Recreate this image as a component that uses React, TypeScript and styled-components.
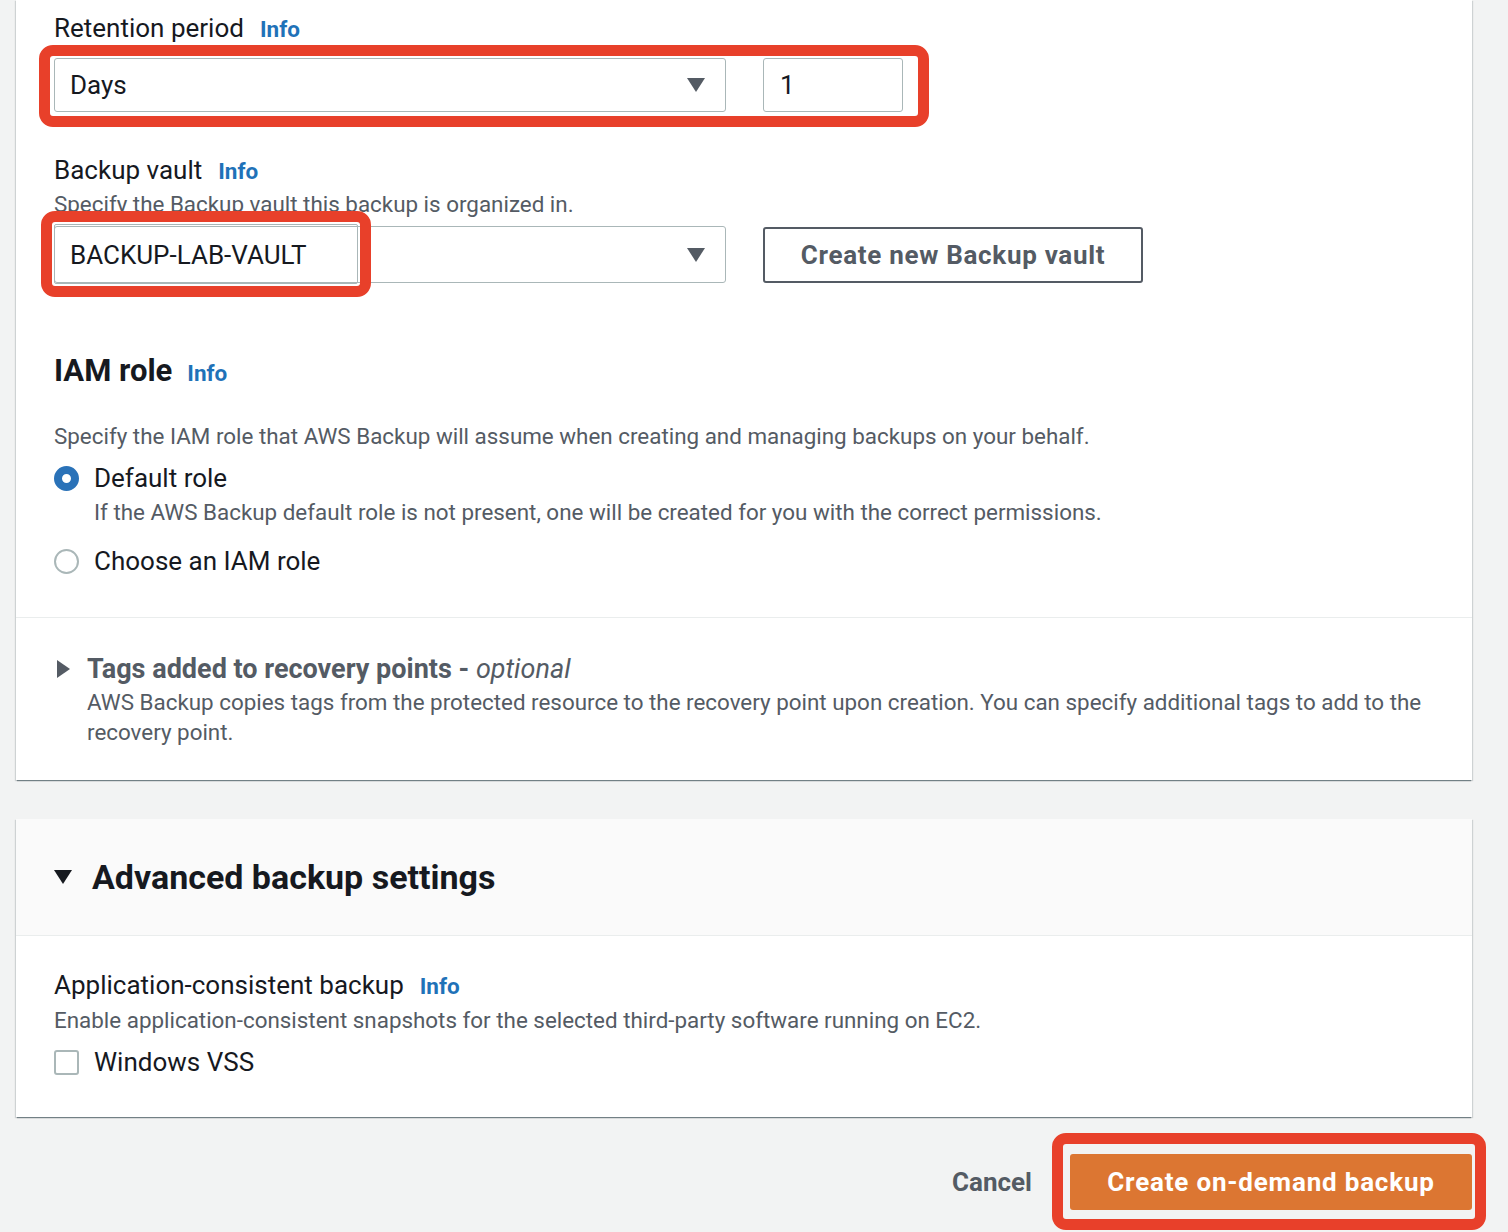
import React from "react";
import styled, { createGlobalStyle } from "styled-components";

const Global = createGlobalStyle`
  html, body { margin: 0; padding: 0; background: #f2f3f3; }
  body { font-family: Roboto, "Open Sans", Arial, sans-serif; color: #16191f; }
  * { box-sizing: border-box; }
`;

const Page = styled.div`
  width: 1508px;
  min-height: 1232px;
  padding: 0 36px 0 16px;
  display: flex;
  flex-direction: column;
`;

const Panel = styled.section<{ $top?: boolean }>`
  background: #fff;
  box-shadow: 0 2px 1px -1px rgba(0, 28, 36, 0.35), 1px 1px 1px 0 rgba(0, 28, 36, 0.15),
    -1px 1px 1px 0 rgba(0, 28, 36, 0.15);
  margin-top: ${(p) => (p.$top ? "0" : "39px")};
`;

const Body = styled.div<{ $pt: number; $pb: number }>`
  padding: ${(p) => p.$pt}px 38px ${(p) => p.$pb}px 38px;
  display: flex;
  flex-direction: column;
`;

const Label = styled.div<{ $mt?: number }>`
  font-size: 26px;
  line-height: 34px;
  height: 34px;
  color: #16191f;
  margin-top: ${(p) => p.$mt ?? 0}px;
  display: flex;
  align-items: baseline;
  gap: 16px;
`;

const Info = styled.span`
  font-size: 22.5px;
  line-height: 1;
  font-weight: 700;
  color: #1f72b8;
`;

const Desc = styled.div<{ $mt?: number; $ml?: number }>`
  font-size: 22.4px;
  line-height: 30px;
  color: #545b64;
  margin-top: ${(p) => p.$mt ?? 0}px;
  margin-left: ${(p) => p.$ml ?? 0}px;
`;

const Row = styled.div<{ $mt: number }>`
  display: flex;
  align-items: center;
  gap: 37px;
  margin-top: ${(p) => p.$mt}px;
`;

const Annotated = styled.div`
  position: relative;
  display: flex;
  align-items: center;
  gap: 37px;
`;

const RedBox = styled.div<{ $l: number; $t: number; $w: number; $h: number; $inner?: boolean }>`
  position: absolute;
  left: ${(p) => p.$l}px;
  top: ${(p) => p.$t}px;
  width: ${(p) => p.$w}px;
  height: ${(p) => p.$h}px;
  border: 11px solid #e8402a;
  border-radius: 14px;
  pointer-events: none;
  &::after {
    content: "";
    display: ${(p) => (p.$inner ? "block" : "none")};
    position: absolute;
    inset: 2px;
    border: 1px solid #aab7b8;
    border-radius: 2px;
  }
`;

const Select = styled.div<{ $h: number }>`
  width: 672px;
  height: ${(p) => p.$h}px;
  border: 1px solid #aab7b8;
  border-radius: 3px;
  background: #fff;
  display: flex;
  align-items: center;
  justify-content: space-between;
  padding: 0 20px 0 15px;
  font-size: 26px;
  color: #16191f;
`;

const NumberBox = styled.div`
  width: 140px;
  height: 54px;
  border: 1px solid #aab7b8;
  border-radius: 3px;
  background: #fff;
  display: flex;
  align-items: center;
  padding: 0 16px;
  font-size: 26px;
`;

const Caret = styled.svg`
  width: 18px;
  height: 14px;
  fill: #545b64;
  flex: none;
`;

const OutlineButton = styled.button`
  width: 380px;
  height: 56px;
  border: 2px solid #545b64;
  border-radius: 3px;
  background: #fff;
  color: #545b64;
  font-family: inherit;
  font-size: 26px;
  letter-spacing: 0.7px;
  font-weight: 700;
  display: flex;
  align-items: center;
  justify-content: center;
`;

const Heading = styled.h2<{ $mt: number }>`
  margin: ${(p) => p.$mt}px 0 0;
  font-size: 31px;
  line-height: 40px;
  height: 40px;
  font-weight: 700;
  color: #16191f;
  display: flex;
  align-items: baseline;
  gap: 15px;
`;

const Choice = styled.label<{ $mt: number }>`
  display: flex;
  align-items: center;
  gap: 15px;
  font-size: 26px;
  line-height: 34px;
  color: #16191f;
  margin-top: ${(p) => p.$mt}px;
`;

const Radio = styled.span<{ $on?: boolean }>`
  width: 25px;
  height: 25px;
  border-radius: 50%;
  flex: none;
  background: #fff;
  border: ${(p) => (p.$on ? "8px solid #2a72b8" : "2px solid #aab7b8")};
`;

const Check = styled.span`
  width: 25px;
  height: 25px;
  border: 2px solid #aab7b8;
  border-radius: 3px;
  background: #fff;
  flex: none;
`;

const Divider = styled.hr`
  border: 0;
  border-top: 1px solid #eaeded;
  margin: 39px 0 0;
`;

const Expander = styled.div`
  display: flex;
  gap: 17px;
  padding: 33px 38px 33px 40px;
`;

const Tri = styled.svg<{ $c: string }>`
  fill: ${(p) => p.$c};
  flex: none;
`;

const ExpanderText = styled.div`
  display: flex;
  flex-direction: column;
`;

const ExpanderTitle = styled.div`
  font-size: 27px;
  line-height: 36px;
  font-weight: 700;
  color: #545b64;
  em { font-weight: 400; font-style: italic; }
`;

const PanelHeader = styled.div`
  height: 117px;
  background: #fafafa;
  border-bottom: 1px solid #eaeded;
  display: flex;
  align-items: center;
  gap: 20px;
  padding: 0 38px;
`;

const PanelTitle = styled.h2`
  margin: 0;
  font-size: 34px;
  font-weight: 700;
  color: #16191f;
`;

const Actions = styled.div`
  display: flex;
  justify-content: flex-end;
  align-items: center;
  gap: 38px;
  margin-top: 37px;
`;

const LinkButton = styled.button`
  background: none;
  border: 0;
  padding: 0;
  font-family: inherit;
  font-size: 26px;
  font-weight: 700;
  color: #545b64;
`;

const PrimaryWrap = styled.div`
  position: relative;
  display: flex;
`;

const Primary = styled.button`
  width: 402px;
  height: 56px;
  background: #dc7632;
  border: 0;
  border-radius: 3px;
  color: #fff;
  font-family: inherit;
  font-size: 26px;
  letter-spacing: 0.8px;
  font-weight: 700;
`;

const DownCaret = () => (
  <Caret viewBox="0 0 18 14">
    <path d="M0 0 H18 L9 14 Z" />
  </Caret>
);

export default function App() {
  return (
    <>
      <Global />
      <Page>
        <Panel $top>
          <Body $pt={11} $pb={0}>
            <Label>
              Retention period <Info>Info</Info>
            </Label>
            <Row $mt={13}>
              <Annotated>
                <Select $h={54}>
                  Days
                  <DownCaret />
                </Select>
                <NumberBox>1</NumberBox>
                <RedBox $l={-15} $t={-13} $w={890} $h={82} />
              </Annotated>
            </Row>

            <Label $mt={41}>
              Backup vault <Info>Info</Info>
            </Label>
            <Desc $mt={2}>Specify the Backup vault this backup is organized in.</Desc>
            <Row $mt={7}>
              <Annotated>
                <Select $h={57}>
                  BACKUP-LAB-VAULT
                  <DownCaret />
                </Select>
                <RedBox $l={-13} $t={-15} $w={330} $h={86} $inner />
              </Annotated>
              <OutlineButton>Create new Backup vault</OutlineButton>
            </Row>

            <Heading $mt={68}>
              IAM role <Info>Info</Info>
            </Heading>
            <Desc $mt={30}>
              Specify the IAM role that AWS Backup will assume when creating and managing backups on your behalf.
            </Desc>
            <Choice $mt={10}>
              <Radio $on />
              Default role
            </Choice>
            <Desc $mt={2} $ml={40}>
              If the AWS Backup default role is not present, one will be created for you with the correct permissions.
            </Desc>
            <Choice $mt={17}>
              <Radio />
              Choose an IAM role
            </Choice>
          </Body>
          <Divider />
          <Expander>
            <Tri $c="#545b64" width="14" height="36" viewBox="0 0 14 36">
              <path d="M1 9 L14 18 L1 27 Z" />
            </Tri>
            <ExpanderText>
              <ExpanderTitle>
                Tags added to recovery points - <em>optional</em>
              </ExpanderTitle>
              <Desc>
                AWS Backup copies tags from the protected resource to the recovery point upon creation. You can
                specify additional tags to add to the recovery point.
              </Desc>
            </ExpanderText>
          </Expander>
        </Panel>

        <Panel>
          <PanelHeader>
            <Tri $c="#16191f" width="18" height="16" viewBox="0 0 18 16">
              <path d="M0 1 H18 L9 15 Z" />
            </Tri>
            <PanelTitle>Advanced backup settings</PanelTitle>
          </PanelHeader>
          <Body $pt={32} $pb={38}>
            <Label>
              Application-consistent backup <Info>Info</Info>
            </Label>
            <Desc $mt={3}>
              Enable application-consistent snapshots for the selected third-party software running on EC2.
            </Desc>
            <Choice $mt={10}>
              <Check />
              Windows VSS
            </Choice>
          </Body>
        </Panel>

        <Actions>
          <LinkButton>Cancel</LinkButton>
          <PrimaryWrap>
            <Primary>Create on-demand backup</Primary>
            <RedBox $l={-18} $t={-21} $w={434} $h={97} />
          </PrimaryWrap>
        </Actions>
      </Page>
    </>
  );
}
